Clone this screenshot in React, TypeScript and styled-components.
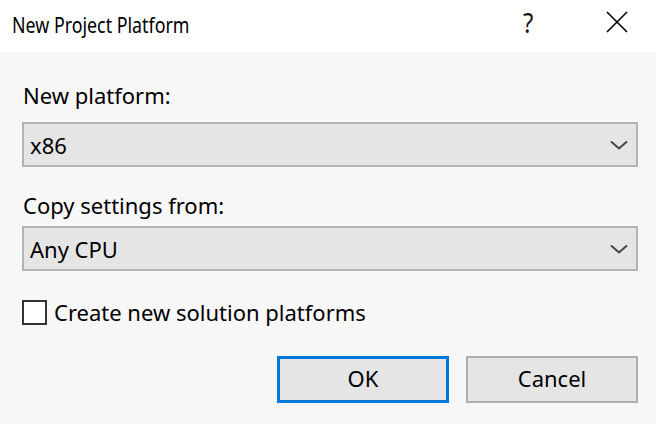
import React from "react";
import styled, { createGlobalStyle } from "styled-components";

const Global = createGlobalStyle`
  html, body { margin: 0; padding: 0; background: #f7f7f7; }
  body { font-family: "Noto Sans", "Open Sans", sans-serif; color: #000; }
  * { box-sizing: border-box; }
`;

const Dialog = styled.div`
  width: 656px;
  height: 424px;
  display: flex;
  flex-direction: column;
  background: #f7f7f7;
`;

const TitleBar = styled.div`
  height: 52px;
  background: #ffffff;
  display: flex;
  align-items: center;
  padding: 0 0 0 12px;
`;

const TitleSlot = styled.div`
  flex: 1;
  padding-bottom: 5px;
`;

const TitleText = styled.span`
  display: inline-block;
  font-family: "Noto Sans", sans-serif;
  font-size: 22px;
  line-height: 28px;
  color: #000;
  transform: scaleX(0.81);
  transform-origin: left center;
  white-space: nowrap;
`;

const TitleButton = styled.div<{ $w: number }>`
  width: ${(p) => p.$w}px;
  height: 52px;
  display: flex;
  align-items: center;
  justify-content: center;
  padding-bottom: 8px;
  font-size: 28px;
  line-height: 30px;
  color: #111;
`;

const Question = styled.span`
  display: inline-block;
  transform: scaleX(0.85);
`;

const Body = styled.div`
  flex: 1;
  display: flex;
  flex-direction: column;
  padding: 0 18px 0 22px;
`;

const Label = styled.div<{ $mt: number }>`
  margin-top: ${(p) => p.$mt}px;
  font-size: 22px;
  line-height: 28px;
  padding-left: 1px;
  color: #000;
`;

const Select = styled.div<{ $mt: number }>`
  margin-top: ${(p) => p.$mt}px;
  height: 45px;
  background: #e5e5e5;
  border: 2px solid #b4b4b4;
  display: flex;
  align-items: center;
  padding: 0 8px 0 6px;
  font-size: 22px;
  line-height: 28px;
`;

const SelectValue = styled.span`
  flex: 1;
`;

const CheckRow = styled.label`
  margin-top: 27px;
  display: flex;
  align-items: center;
  gap: 7px;
  font-size: 22px;
  line-height: 28px;
`;

const CheckBox = styled.span`
  width: 25px;
  height: 25px;
  border: 2px solid #333;
  background: #fff;
`;

const ButtonRow = styled.div`
  margin-top: 30px;
  display: flex;
  justify-content: flex-end;
  gap: 17px;
`;

const Button = styled.button<{ $primary?: boolean }>`
  width: 172px;
  height: 47px;
  background: #e5e5e5;
  border: ${(p) => (p.$primary ? "3px solid #0078d7" : "2px solid #adadad")};
  font-family: "Noto Sans", "Open Sans", sans-serif;
  font-size: 22px;
  line-height: 28px;
  color: #000;
  padding: 0 0 3px 0;
  display: flex;
  align-items: center;
  justify-content: center;
`;

const Chevron = () => (
  <svg width="18" height="10" viewBox="0 0 18 10">
    <path d="M1 1.5 L9 8.5 L17 1.5" fill="none" stroke="#444" strokeWidth="2" />
  </svg>
);

const Close = () => (
  <svg width="22" height="22" viewBox="0 0 22 22">
    <path d="M1 1 L21 21 M21 1 L1 21" stroke="#000" strokeWidth="1.6" />
  </svg>
);

export default function App() {
  return (
    <>
      <Global />
      <Dialog>
        <TitleBar>
          <TitleSlot>
            <TitleText>New Project Platform</TitleText>
          </TitleSlot>
          <TitleButton $w={100}>
            <Question>?</Question>
          </TitleButton>
          <TitleButton $w={78}>
            <Close />
          </TitleButton>
        </TitleBar>
        <Body>
          <Label $mt={29}>New platform:</Label>
          <Select $mt={13}>
            <SelectValue>x86</SelectValue>
            <Chevron />
          </Select>
          <Label $mt={24}>Copy settings from:</Label>
          <Select $mt={7}>
            <SelectValue>Any CPU</SelectValue>
            <Chevron />
          </Select>
          <CheckRow>
            <CheckBox />
            Create new solution platforms
          </CheckRow>
          <ButtonRow>
            <Button $primary>OK</Button>
            <Button>Cancel</Button>
          </ButtonRow>
        </Body>
      </Dialog>
    </>
  );
}
